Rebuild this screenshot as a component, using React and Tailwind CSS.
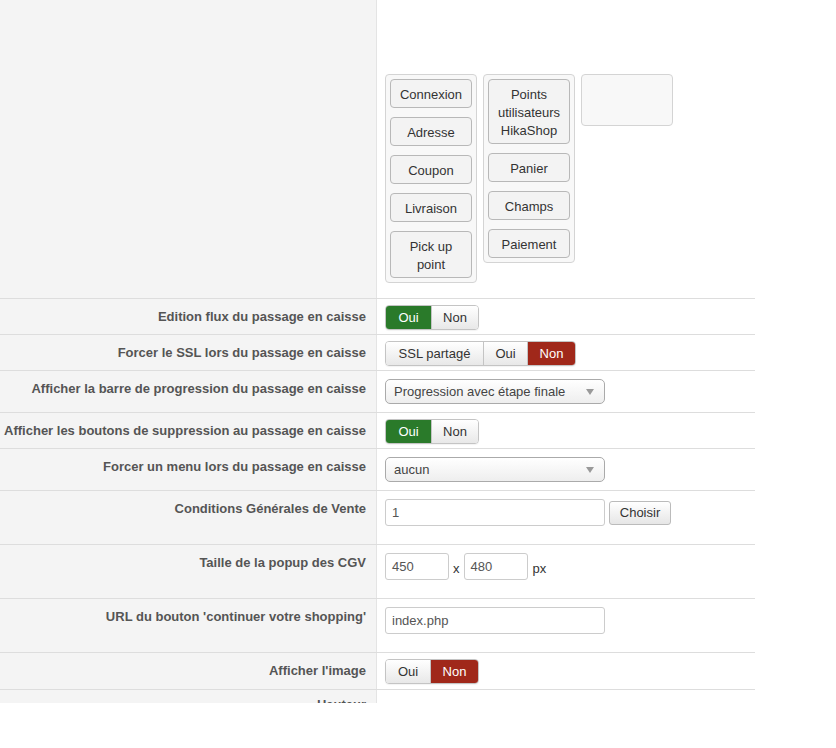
import React from "react";

const font = { fontFamily: '"Liberation Sans", Arial, sans-serif' };

function Row({ h, label, top, children, first, lpt = 9 }) {
  return (
    <div
      className={`flex ${first ? "" : "border-t border-[#dddddd]"}`}
      style={{ height: h }}
    >
      <div
        className="w-[377px] shrink-0 bg-[#f4f4f4] border-r border-[#e4e4e4] pr-[10px] text-right text-[13px] leading-[18px] font-bold text-[#555555]"
        style={{ paddingTop: lpt }}
      >
        {label}
      </div>
      <div className="flex-1 pl-[8px]" style={{ paddingTop: top }}>
        {children}
      </div>
    </div>
  );
}

function Seg({ items }) {
  return (
    <div className="flex h-[25px] rounded-[4px] overflow-hidden border border-[#c4c4c4] w-max shadow-[0_1px_1px_rgba(0,0,0,0.05)]">
      {items.map((it, i) => (
        <div
          key={i}
          className={`flex items-center justify-center text-[13px] ${
            i > 0 ? "border-l border-[#c4c4c4]" : ""
          } ${
            it.a === "g"
              ? "bg-[#2a7a2a] text-white border-[#2a7a2a]"
              : it.a === "r"
              ? "bg-[#a0281a] text-white border-[#a0281a]"
              : "bg-gradient-to-b from-[#ffffff] to-[#e8e8e8] text-[#333333]"
          }`}
          style={{ width: it.w }}
        >
          {it.t}
        </div>
      ))}
    </div>
  );
}

function Select({ value }) {
  return (
    <div className="relative flex items-center w-[220px] h-[25px] rounded-[5px] border border-[#aaaaaa] bg-gradient-to-b from-[#ffffff] to-[#eeeeee] pl-[8px] text-[13px] text-[#444444]">
      {value}
      <svg
        className="absolute right-[10px] top-[9px]"
        width="8"
        height="6"
        viewBox="0 0 8 6"
      >
        <path d="M0 0 L8 0 L4 6 Z" fill="#999999" />
      </svg>
    </div>
  );
}

function Input({ value, w }) {
  return (
    <div
      className="flex items-center h-[27px] rounded-[3px] border border-[#cccccc] bg-white px-[6px] text-[13px] text-[#555555]"
      style={{ width: w }}
    >
      {value}
    </div>
  );
}

function DragBtn({ children }) {
  return (
    <div className="w-[82px] rounded-[4px] border border-[#b8b8b8] bg-[#f3f3f3] pt-[6px] pb-[3px] text-center text-[13px] leading-[18px] text-[#333333]">
      {children}
    </div>
  );
}

function Col({ children, h }) {
  return (
    <div
      className="w-[92px] rounded-[4px] border border-[#d4d4d4] bg-[#f8f8f8] px-[4px] pt-[4px] pb-[4px] flex flex-col gap-[9px]"
      style={h ? { height: h } : undefined}
    >
      {children}
    </div>
  );
}

export default function App() {
  return (
    <div className="w-[836px] h-[748px] bg-white" style={font}>
      <div className="w-[755px] h-[703px] overflow-hidden">
        <Row h={298} first top={74}>
          <div className="flex items-start gap-[6px]">
            <Col>
              <DragBtn>Connexion</DragBtn>
              <DragBtn>Adresse</DragBtn>
              <DragBtn>Coupon</DragBtn>
              <DragBtn>Livraison</DragBtn>
              <DragBtn>
                Pick up
                <br />
                point
              </DragBtn>
            </Col>
            <Col>
              <DragBtn>
                Points
                <br />
                utilisateurs
                <br />
                HikaShop
              </DragBtn>
              <DragBtn>Panier</DragBtn>
              <DragBtn>Champs</DragBtn>
              <DragBtn>Paiement</DragBtn>
            </Col>
            <Col h={52} />
          </div>
        </Row>
        <Row h={36} label="Edition flux du passage en caisse" top={6}>
          <Seg
            items={[
              { t: "Oui", w: 45, a: "g" },
              { t: "Non", w: 47 },
            ]}
          />
        </Row>
        <Row h={36} label="Forcer le SSL lors du passage en caisse" top={6}>
          <Seg
            items={[
              { t: "SSL partagé", w: 97 },
              { t: "Oui", w: 44 },
              { t: "Non", w: 48, a: "r" },
            ]}
          />
        </Row>
        <Row
          h={42}
          label="Afficher la barre de progression du passage en caisse"
          top={8}
        >
          <Select value="Progression avec étape finale" />
        </Row>
        <Row
          h={36}
          label="Afficher les boutons de suppression au passage en caisse"
          top={6}
        >
          <Seg
            items={[
              { t: "Oui", w: 45, a: "g" },
              { t: "Non", w: 47 },
            ]}
          />
        </Row>
        <Row h={42} label="Forcer un menu lors du passage en caisse" top={8}>
          <Select value="aucun" />
        </Row>
        <Row h={54} label="Conditions Générales de Vente" top={8}>
          <div className="flex items-start gap-[4px]">
            <Input value="1" w={220} />
            <div className="mt-[2px] flex items-center justify-center w-[62px] h-[24px] rounded-[3px] border border-[#bbbbbb] bg-gradient-to-b from-[#ffffff] to-[#e6e6e6] text-[13px] text-[#333333]">
              Choisir
            </div>
          </div>
        </Row>
        <Row h={54} label="Taille de la popup des CGV" top={8}>
          <div className="flex items-center text-[13px] text-[#333333]">
            <Input value="450" w={64} />
            <span className="mx-[4px] mt-[4px]">x</span>
            <Input value="480" w={64} />
            <span className="ml-[5px] mt-[4px]">px</span>
          </div>
        </Row>
        <Row h={54} label="URL du bouton 'continuer votre shopping'" top={8}>
          <Input value="index.php" w={220} />
        </Row>
        <Row h={37} label="Afficher l'image" top={6}>
          <Seg
            items={[
              { t: "Oui", w: 44 },
              { t: "Non", w: 48, a: "r" },
            ]}
          />
        </Row>
        <Row h={40} label="Hauteur" top={6} lpt={6} />
      </div>
    </div>
  );
}
